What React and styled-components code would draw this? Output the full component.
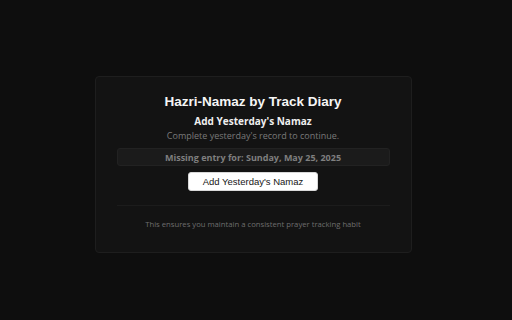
import React from 'react';
import styled, { createGlobalStyle } from 'styled-components';

const Global = createGlobalStyle`
  html, body {
    margin: 0;
    height: 100%;
    background: #0e0e0e;
  }
  #root {
    height: 100%;
  }
`;

const Page = styled.div`
  height: 320px;
  display: flex;
  align-items: center;
  justify-content: center;
  padding-right: 6px;
  padding-top: 9px;
  box-sizing: border-box;
  font-family: "Open Sans", "Liberation Sans", sans-serif;
`;

const Card = styled.div`
  width: 317px;
  box-sizing: border-box;
  background: #131313;
  border: 1px solid #1e1e1e;
  border-radius: 4px;
  padding: 16px 21px 23px;
  display: flex;
  flex-direction: column;
  align-items: center;
  text-align: center;
`;

const Title = styled.h1`
  margin: 0;
  font-family: "Liberation Sans", Arial, sans-serif;
  font-size: 13.5px;
  font-weight: 700;
  color: #f6f6f6;
  line-height: 17px;
`;

const Subtitle = styled.h2`
  margin: 4px 0 0;
  font-size: 10px;
  font-weight: 700;
  color: #efefef;
  line-height: 14px;
`;

const Hint = styled.p`
  margin: 1px 0 0;
  font-size: 9px;
  color: #7a7a7a;
  line-height: 14px;
`;

const Missing = styled.div`
  margin-top: 5px;
  align-self: stretch;
  height: 18px;
  box-sizing: border-box;
  display: flex;
  align-items: center;
  justify-content: center;
  background: #1b1b1b;
  border: 1px solid #222;
  border-radius: 3px;
  font-size: 9px;
  font-weight: 700;
  color: #7f7f7f;
`;

const Button = styled.button`
  margin-top: 6px;
  width: 130px;
  height: 19px;
  padding: 0;
  background: #ffffff;
  border: 1px solid #d8d8d8;
  border-radius: 3px;
  font-family: "Liberation Sans", Arial, sans-serif;
  font-size: 9.5px;
  color: #161616;
  cursor: pointer;
`;

const Divider = styled.hr`
  margin: 14px 0 0;
  align-self: stretch;
  border: none;
  border-top: 1px solid #1c1c1c;
`;

const Footer = styled.p`
  margin: 13px 0 0;
  font-size: 7.7px;
  color: #6e6e6e;
  line-height: 10px;
`;

export default function App() {
  return (
    <>
      <Global />
      <Page>
        <Card>
          <Title>Hazri-Namaz by Track Diary</Title>
          <Subtitle>Add Yesterday's Namaz</Subtitle>
          <Hint>Complete yesterday's record to continue.</Hint>
          <Missing>Missing entry for: Sunday, May 25, 2025</Missing>
          <Button>Add Yesterday's Namaz</Button>
          <Divider />
          <Footer>This ensures you maintain a consistent prayer tracking habit</Footer>
        </Card>
      </Page>
    </>
  );
}
